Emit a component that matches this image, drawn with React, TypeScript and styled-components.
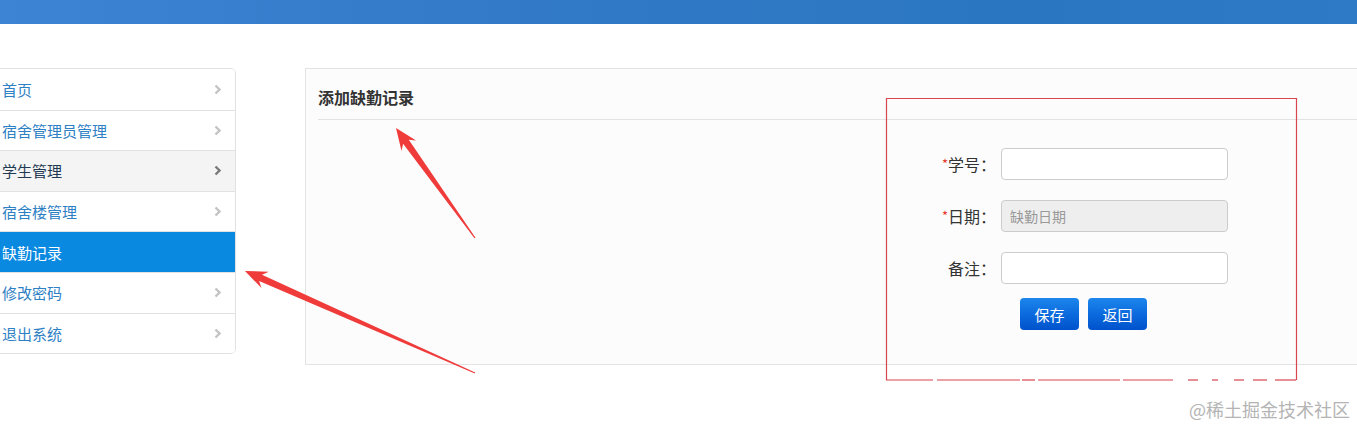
import React, { FC } from "react";
import styled, { createGlobalStyle } from "styled-components";

const GlobalStyle = createGlobalStyle`
  html, body {
    margin: 0;
    padding: 0;
    background: #ffffff;
  }
  body {
    font-family: "Noto Sans CJK SC", "Liberation Sans", sans-serif;
    font-size: 14px;
    color: #333;
    overflow: hidden;
  }
  * {
    box-sizing: border-box;
  }
`;

// page shell
const Page = styled.div`
  position: relative;
  width: 100%;
  height: 427px;
  overflow: hidden;
`;

const TopBar = styled.div`
  height: 24px;
  background: linear-gradient(to right, #3d84d4 0%, #3079c6 45%, #2b76c1 75%, #2e7ac6 100%);
`;

const Body = styled.div`
  display: flex;
  align-items: flex-start;
  gap: 69px;
  padding-top: 44px;
`;

// sidebar
const SideMenu = styled.ul`
  list-style: none;
  margin: 0 0 0 -12px;
  padding: 0;
  width: 248px;
  flex: none;
  background: #fff;
  border: 1px solid #e2e2e2;
  border-radius: 0 5px 5px 0;
  overflow: hidden;
`;

const MenuItem = styled.li<{ $state?: "hover" | "active" }>`
  display: flex;
  align-items: center;
  justify-content: space-between;
  height: 40.6px;
  padding: 0 14px 0 13px;
  border-top: 1px solid #e2e2e2;
  font-size: 15px;
  color: ${({ $state }) =>
    $state === "active" ? "#ffffff" : $state === "hover" ? "#1f3a52" : "#2e80c4"};
  background: ${({ $state }) =>
    $state === "active" ? "#0a89e0" : $state === "hover" ? "#f4f4f4" : "#ffffff"};

  &:first-child {
    border-top: none;
  }
`;

const Chevron: FC<{ dark?: boolean }> = ({ dark }) => (
  <svg width="7" height="11" viewBox="0 0 7 11">
    <path
      d="M1.5 1.5 L5.5 5.5 L1.5 9.5"
      fill="none"
      stroke={dark ? "#7a7a7a" : "#c4c4c4"}
      strokeWidth="2.4"
    />
  </svg>
);

// main panel
const Panel = styled.section`
  flex: 1;
  margin-right: -40px;
  background: #fcfcfc;
  border: 1px solid #e3e3e3;
  padding-bottom: 34px;
`;

const PanelHeading = styled.h3`
  margin: 0 0 0 12px;
  padding-top: 6px;
  height: 51px;
  line-height: 44px;
  font-size: 16px;
  font-weight: bold;
  color: #333;
  border-bottom: 1px solid #e3e3e3;
`;

const Form = styled.form`
  display: flex;
  flex-direction: column;
  padding: 28px 0 0 605px;
`;

const FieldRow = styled.div`
  display: flex;
  align-items: center;
  margin-bottom: 20px;

  &:nth-last-child(2) {
    margin-bottom: 14px;
  }
`;

const Label = styled.label`
  width: 85px;
  margin-right: 5px;
  text-align: right;
  font-size: 16px;
  color: #333;
  white-space: nowrap;
`;

const Required = styled.span`
  color: #e8392f;
  font-size: 13px;
  vertical-align: 2px;
`;

const Input = styled.input`
  width: 227px;
  height: 32px;
  padding: 0 8px;
  border: 1px solid #cccccc;
  border-radius: 4px;
  background: #fff;
  font-family: inherit;
  font-size: 14px;
  color: #555;
  outline: none;

  &:disabled {
    background: #eeeeee;
  }

  &::placeholder {
    color: #999;
  }
`;

const ButtonRow = styled.div`
  display: flex;
  gap: 9px;
  padding-left: 109px;
`;

const Button = styled.button`
  width: 59px;
  height: 32px;
  border: none;
  border-radius: 4px;
  background: linear-gradient(to bottom, #1c86ec 0%, #0a68dc 55%, #0052cc 100%);
  color: #fff;
  font-family: inherit;
  font-size: 15px;
  padding: 0;
  cursor: pointer;
`;

// overlays
const Annotations = styled.svg`
  position: absolute;
  top: 0;
  left: 0;
  pointer-events: none;
`;

const Watermark = styled.div`
  position: absolute;
  right: 7px;
  bottom: 5px;
  font-size: 18px;
  color: #b4b4b4;
`;

const menu = ["首页", "宿舍管理员管理", "学生管理", "宿舍楼管理", "缺勤记录", "修改密码", "退出系统"];

function arrowPoints(tx: number, ty: number, sx: number, sy: number) {
  const dx = sx - tx;
  const dy = sy - ty;
  const len = Math.hypot(dx, dy);
  const ux = dx / len;
  const uy = dy / len;
  const px = -uy;
  const py = ux;
  const head = 20;
  const headW = 9;
  const neckW = 3.5;
  const pt = (along: number, side: number) =>
    `${(tx + ux * along + px * side).toFixed(1)},${(ty + uy * along + py * side).toFixed(1)}`;
  return [
    pt(0, 0),
    pt(head + 2, headW),
    pt(head - 3, neckW),
    pt(len, 0.6),
    pt(len, -0.6),
    pt(head - 3, -neckW),
    pt(head + 2, -headW),
  ].join(" ");
}

const dashes: [number, number][] = [
  [886, 933], [937, 1020], [1022, 1035], [1038, 1120], [1123, 1173],
  [1188, 1198], [1212, 1218], [1234, 1244], [1253, 1267], [1275, 1296],
];

const App: FC = () => {
  return (
    <Page>
      <GlobalStyle />
      <TopBar />
      <Body>
        <SideMenu>
          {menu.map((name) => {
            const state = name === "缺勤记录" ? "active" : name === "学生管理" ? "hover" : undefined;
            return (
              <MenuItem key={name} $state={state}>
                <span>{name}</span>
                {state !== "active" && <Chevron dark={state === "hover"} />}
              </MenuItem>
            );
          })}
        </SideMenu>

        <Panel>
          <PanelHeading>添加缺勤记录</PanelHeading>
          <Form onSubmit={(e) => e.preventDefault()}>
            <FieldRow>
              <Label>
                <Required>*</Required>学号：
              </Label>
              <Input type="text" />
            </FieldRow>
            <FieldRow>
              <Label>
                <Required>*</Required>日期：
              </Label>
              <Input type="text" placeholder="缺勤日期" disabled />
            </FieldRow>
            <FieldRow>
              <Label>备注：</Label>
              <Input type="text" />
            </FieldRow>
            <ButtonRow>
              <Button type="submit">保存</Button>
              <Button type="button">返回</Button>
            </ButtonRow>
          </Form>
        </Panel>
      </Body>

      <Annotations width="1357" height="427" viewBox="0 0 1357 427">
        <g stroke="#d9454f" strokeWidth="1.2" fill="none">
          <path d="M886.5 380 L886.5 98.5 L1296.5 98.5 L1296.5 380" />
          {dashes.map(([a, b]) => (
            <line key={a} x1={a} y1="380" x2={b} y2="380" />
          ))}
        </g>
        <polygon points={arrowPoints(396, 128, 475, 238)} fill="#f03b3b" />
        <polygon points={arrowPoints(245, 271, 475, 373)} fill="#f03b3b" />
      </Annotations>

      <Watermark>@稀土掘金技术社区</Watermark>
    </Page>
  );
};

export default App;
